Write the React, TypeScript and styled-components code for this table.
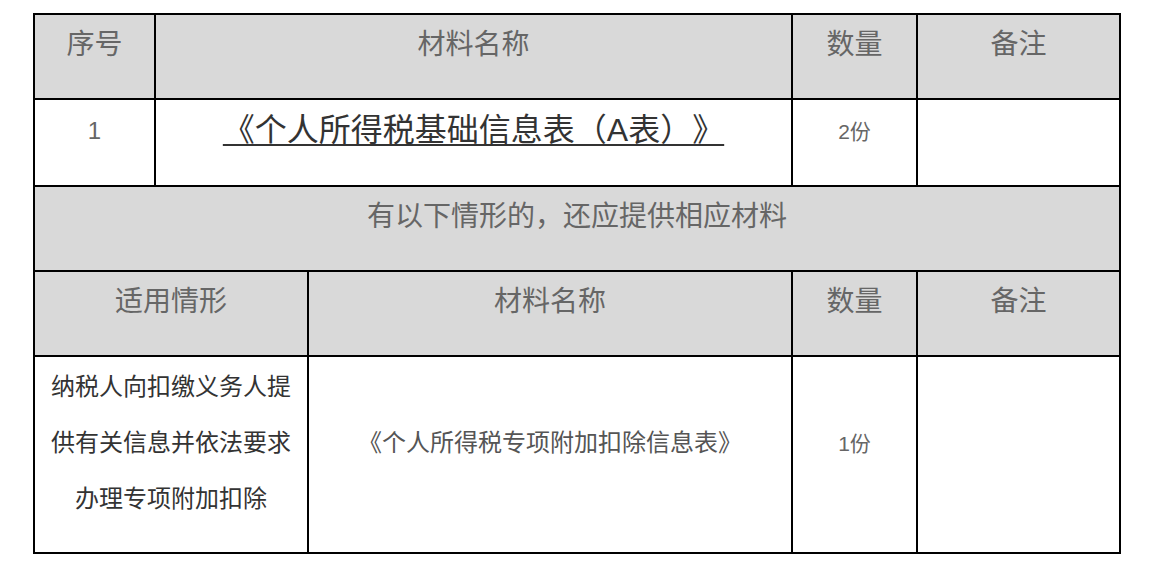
import styled, { createGlobalStyle } from "styled-components";

const GlobalStyle = createGlobalStyle`
  html, body {
    margin: 0;
    padding: 0;
    background: #ffffff;
  }
  body {
    font-family: "Liberation Sans", "Noto Sans CJK SC", sans-serif;
    text-spacing-trim: space-all;
  }
`;

const Page = styled.div`
  padding: 13px 0 0 33px;
`;

const Table = styled.table`
  width: 1086px;
  table-layout: fixed;
  border-collapse: collapse;
  border: 2px solid #000;
`;

const Cell = styled.td<{ $head?: boolean; $size?: number; $color?: string }>`
  border: 2px solid #000;
  background: ${(p) => (p.$head ? "#d9d9d9" : "#ffffff")};
  color: ${(p) => p.$color || "#666666"};
  font-size: ${(p) => p.$size || 28}px;
  line-height: 56px;
  text-align: center;
  vertical-align: middle;
  padding: 2px 8px 25px;
`;

const DocLink = styled.a`
  color: #333333;
  font-size: 32px;
  text-decoration: underline;
  text-decoration-thickness: 2px;
  text-underline-offset: 3px;
  cursor: pointer;
`;

const Count = styled.span`
  font-size: 21px;
`;

export default function App() {
  return (
    <>
      <GlobalStyle />
      <Page>
        <Table>
          <colgroup>
            <col style={{ width: 121 }} />
            <col style={{ width: 153 }} />
            <col style={{ width: 484 }} />
            <col style={{ width: 125 }} />
            <col style={{ width: 203 }} />
          </colgroup>
          <tbody>
            <tr>
              <Cell $head>序号</Cell>
              <Cell $head colSpan={2}>材料名称</Cell>
              <Cell $head>数量</Cell>
              <Cell $head>备注</Cell>
            </tr>
            <tr>
              <Cell $size={24}>1</Cell>
              <Cell colSpan={2}>
                <DocLink>《个人所得税基础信息表（A表）》</DocLink>
              </Cell>
              <Cell>
                <Count>2份</Count>
              </Cell>
              <Cell />
            </tr>
            <tr>
              <Cell $head colSpan={5}>有以下情形的，还应提供相应材料</Cell>
            </tr>
            <tr>
              <Cell $head colSpan={2}>适用情形</Cell>
              <Cell $head>材料名称</Cell>
              <Cell $head>数量</Cell>
              <Cell $head>备注</Cell>
            </tr>
            <tr>
              <Cell $size={24} $color="#333333" colSpan={2}>
                纳税人向扣缴义务人提供有关信息并依法要求办理专项附加扣除
              </Cell>
              <Cell $size={24} $color="#555555">
                《个人所得税专项附加扣除信息表》
              </Cell>
              <Cell>
                <Count>1份</Count>
              </Cell>
              <Cell />
            </tr>
          </tbody>
        </Table>
      </Page>
    </>
  );
}
